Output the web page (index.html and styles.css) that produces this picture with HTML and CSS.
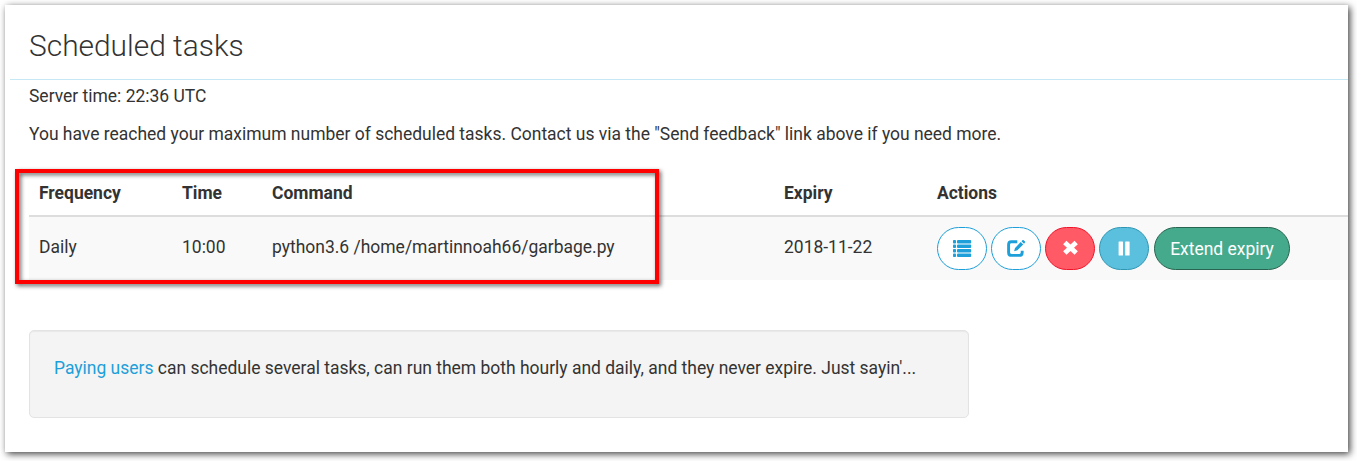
FILE: index.html
```html
<!DOCTYPE html>
<html lang="en">
<head>
<meta charset="utf-8">
<title>Scheduled tasks</title>
<link rel="stylesheet" href="styles.css">
</head>
<body>
<main class="card">
  <header class="card-header"><h1 class="title">Scheduled tasks</h1></header>
  <div class="content">
    <p class="server-time"><span>Server time: 22:36 UTC</span></p>
    <p class="notice"><span>You have reached your maximum number of scheduled tasks. Contact us via the "Send feedback" link above if you need more.</span></p>
    <div class="table-wrap">
      <table class="tasks">
        <colgroup><col class="col-frequency"><col class="col-time"><col class="col-command"><col class="col-expiry"><col></colgroup>
        <thead>
          <tr><th>Frequency</th><th>Time</th><th>Command</th><th>Expiry</th><th>Actions</th></tr>
        </thead>
        <tbody>
          <tr>
            <td>Daily</td><td>10:00</td><td>python3.6 /home/martinnoah66/garbage.py</td><td>2018-11-22</td>
            <td>
              <div class="actions">
                <button class="btn btn-outline" aria-label="View log">
                  <svg class="icon" viewBox="0 0 20 20" fill="currentColor"><rect x="1" y="1" width="3" height="3.6" rx=".8"/><rect x="1" y="5.5" width="3" height="3.6" rx=".8"/><rect x="1" y="10" width="3" height="3.6" rx=".8"/><rect x="1" y="14.5" width="3" height="3.6" rx=".8"/><rect x="5" y="1" width="14.2" height="3.6" rx="1"/><rect x="5" y="5.5" width="14.2" height="3.6" rx="1"/><rect x="5" y="10" width="14.2" height="3.6" rx="1"/><rect x="5" y="14.5" width="14.2" height="3.6" rx="1"/></svg>
                </button>
                <button class="btn btn-outline" aria-label="Edit">
                  <svg class="icon" viewBox="0 0 20 20"><path d="M11.3 2.7H5.4Q2.6 2.7 2.6 5.5V13.6Q2.6 16.4 5.4 16.4H13.4Q16.2 16.4 16.2 13.6V11.7" fill="none" stroke="currentColor" stroke-width="2.9"/><path d="M8.1 12.2L9 9 14.7 3.1 17.2 5.5 11.4 11.3ZM15.5 2.3L16.7 1.1Q17.2.8 17.7 1.2L19 2.5Q19.4 3 19 3.5L18 4.7Z" fill="currentColor"/></svg>
                </button>
                <button class="btn btn-danger" aria-label="Delete">
                  <svg class="icon" viewBox="0 0 20 20"><path d="M4.8 3.5L16.2 14M16.2 3.5L4.8 14" fill="none" stroke="currentColor" stroke-width="4.9"/></svg>
                </button>
                <button class="btn btn-info" aria-label="Pause">
                  <svg class="icon" viewBox="0 0 20 20" fill="currentColor"><rect x="4.6" y="2.5" width="4.4" height="14" rx=".5"/><rect x="11.2" y="2.5" width="4.4" height="14" rx=".5"/></svg>
                </button>
                <button class="btn btn-success"><span>Extend expiry</span></button>
              </div>
            </td>
          </tr>
        </tbody>
      </table>
      <div class="highlight"></div>
    </div>
    <div class="well"><span><a class="link">Paying users</a> can schedule several tasks, can run them both hourly and daily, and they never expire. Just sayin'...</span></div>
  </div>
</main>
</body>
</html>
```
FILE: styles.css
```css
* { box-sizing: border-box; }
body {
  margin: 0;
  padding: 5px 9px 9px 5px;
  height: 461px;
  overflow: hidden;
  background: #fff;
  color: #333;
  font: 17.48px/25px Roboto, sans-serif;
}
.card {
  height: 447px;
  background: #fff;
  box-shadow: 2px 2px 7px rgba(0, 0, 0, .75);
}
.card-header {
  height: 75px;
  margin-left: 5px;
  padding: 21px 0 0 19px;
  border-bottom: 1px solid #c5e8f5;
}
.title { margin: 0; font-size: 29.9px; line-height: 40px; font-weight: 300; }
.content { padding-left: 24px; }
.server-time { margin: 0; padding-top: 4px; height: 29px; }
.notice { margin: 13px 0 0; }
.table-wrap { position: relative; margin-top: 23px; }
.tasks { width: 100%; border-collapse: separate; border-spacing: 0; table-layout: fixed; }
.col-frequency { width: 143px; }
.col-time { width: 90px; }
.col-command { width: 512px; }
.col-expiry { width: 153px; }
.tasks th, .tasks td { padding: 11px 0 9px 10px; text-align: left; vertical-align: top; }
.tasks th { height: 47px; border-bottom: 2px solid #ddd; font-weight: 700; }
.tasks td { height: 63px; padding-top: 18px; background: #f9f9f9; }
.tasks td:last-child { padding: 10px 0 10px 10px; }
.actions { display: flex; gap: 4px; }
.btn {
  width: 50px;
  height: 43px;
  padding: 0;
  display: flex;
  align-items: center;
  justify-content: center;
  border: 1px solid;
  border-radius: 22px;
  color: #fff;
  font: 17.48px/25px Roboto, sans-serif;
}
.btn-outline { background: #fff; border-color: #1d9fd9; color: #1d9fd9; }
.btn-danger { background: #ff5a65; border-color: #f0142a; }
.btn-info { background: #5bc0de; border-color: #2f96b4; }
.btn-success { width: 136px; margin-left: 1px; padding-top: 2px; background: #45aa8b; border-color: #28644f; }
.icon { width: 20px; height: 20px; display: block; }
.highlight {
  position: absolute;
  left: -14px;
  top: -1px;
  width: 644px;
  height: 115px;
  border: 4px solid #f00;
  filter: drop-shadow(2px 2px 2px rgba(0, 0, 0, .6));
}
.well {
  width: 940px;
  height: 88px;
  margin-top: 50px;
  padding: 25px 24px 23px;
  border: 1px solid #e3e3e3;
  border-radius: 5px;
  background: #f4f4f4;
  box-shadow: inset 0 1px 1px rgba(0, 0, 0, .05);
}
.link { color: #1d9fd9; }
```
